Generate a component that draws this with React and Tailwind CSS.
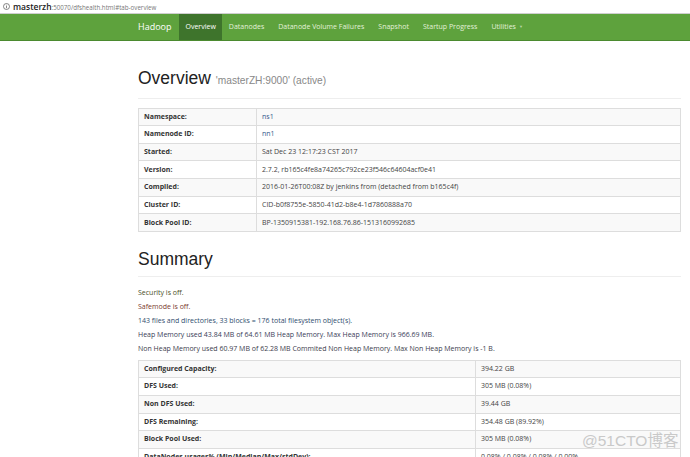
import React from "react";

const overviewRows = [
  ["Namespace:", "ns1", "text-[#34588c]"],
  ["Namenode ID:", "nn1", "text-[#34588c]"],
  ["Started:", "Sat Dec 23 12:17:23 CST 2017", "text-[#444]"],
  ["Version:", "2.7.2, rb165c4fe8a74265c792ce23f546c64604acf0e41", "text-[#444]"],
  ["Compiled:", "2016-01-26T00:08Z by jenkins from (detached from b165c4f)", "text-[#444]"],
  ["Cluster ID:", "CID-b0f8755e-5850-41d2-b8e4-1d7860888a70", "text-[#444]"],
  ["Block Pool ID:", "BP-1350915381-192.168.76.86-1513160992685", "text-[#444]"],
];

const summaryRows = [
  ["Configured Capacity:", "394.22 GB"],
  ["DFS Used:", "305 MB (0.08%)"],
  ["Non DFS Used:", "39.44 GB"],
  ["DFS Remaining:", "354.48 GB (89.92%)"],
  ["Block Pool Used:", "305 MB (0.08%)"],
  ["DataNodes usages% (Min/Median/Max/stdDev):", "0.08% / 0.08% / 0.08% / 0.00%"],
  ["Live Nodes", "3 (Decommissioned: 0)"],
];

const navItems = ["Datanodes", "Datanode Volume Failures", "Snapshot", "Startup Progress"];

const body = { fontFamily: '"Open Sans", "Noto Sans", sans-serif' };
const head = { fontFamily: '"Liberation Sans", Arial, sans-serif' };

function InfoTable({ rows, labelWidth }) {
  return (
    <div className="border border-[#ddd] border-b-0 text-[7px]" style={body}>
      {rows.map(([label, value, color], i) => (
        <div
          key={label}
          className={`flex h-[17.67px] items-center border-b border-[#ddd] ${i % 2 === 0 ? "bg-[#f9f9f9]" : "bg-white"}`}
        >
          <div className={`${labelWidth} h-full flex items-center shrink-0 border-r border-[#ddd] px-[5px] font-bold text-[#333]`}>
            {label}
          </div>
          <div className={`px-[5px] ${color || "text-[#444]"}`}>{value}</div>
        </div>
      ))}
    </div>
  );
}

export default function App() {
  return (
    <div className="relative h-[457px] w-[690px] overflow-hidden bg-white">
      {/* address bar */}
      <div className="flex h-[14px] items-center gap-[3px] border-b border-[#cfcfcf] pl-[3px] leading-[13px]" style={body}>
        <svg width="7" height="7" viewBox="0 0 10 10">
          <circle cx="5" cy="5" r="4.3" fill="none" stroke="#555" strokeWidth="1" />
          <rect x="4.5" y="4.2" width="1" height="3.3" fill="#555" />
          <rect x="4.5" y="2.5" width="1" height="1" fill="#555" />
        </svg>
        <span className="text-[8.5px] font-semibold text-[#222]">
          masterzh<span className="text-[6.2px] font-normal text-[#777]">:50070/dfshealth.html#tab-overview</span>
        </span>
      </div>

      {/* navbar */}
      <div className="flex h-[27px] items-stretch border-b border-[#4b8a2f] bg-[#5ea23d] pl-[138px]" style={body}>
        <div className="flex items-center pr-[8px] text-[9px] text-white">Hadoop</div>
        <div className="flex items-center bg-[#3e742c] px-[6px] text-[7px] text-white">Overview</div>
        {navItems.map((n) => (
          <div key={n} className="flex items-center px-[7px] text-[7px] text-[#e3f1da]">
            {n}
          </div>
        ))}
        <div className="flex items-center gap-[3px] px-[7px] text-[7px] text-[#e3f1da]">
          Utilities
          <span className="text-[4px] text-[#b9d8a8]">▼</span>
        </div>
      </div>

      <div className="ml-[138px] w-[543px]">
        {/* Overview */}
        <div className="mt-[27px] border-b border-[#eee] pb-[7px]">
          <h1 className="text-[17.5px] leading-[20px] text-[#222]" style={head}>
            Overview <span className="text-[10.2px] text-[#888]">'masterZH:9000' (active)</span>
          </h1>
        </div>
        <div className="mt-[8.5px]">
          <InfoTable rows={overviewRows} labelWidth="w-[118px]" />
        </div>

        {/* Summary */}
        <div className="mt-[16.5px] border-b border-[#eee] pb-[7px]">
          <h1 className="text-[17.5px] leading-[20px] text-[#222]" style={head}>
            Summary
          </h1>
        </div>
        <div className="mt-[9px] text-[7px] leading-[14.2px]" style={body}>
          <p className="text-[#4a5026]">Security is off.</p>
          <p className="text-[#7a3a2c]">Safemode is off.</p>
          <p className="text-[#2f4d6e]">143 files and directories, 33 blocks = 176 total filesystem object(s).</p>
          <p className="text-[#3a4058]">Heap Memory used 43.84 MB of 64.61 MB Heap Memory. Max Heap Memory is 966.69 MB.</p>
          <p className="text-[#3c3c4c]">Non Heap Memory used 60.97 MB of 62.28 MB Commited Non Heap Memory. Max Non Heap Memory is -1 B.</p>
        </div>
        <div className="mt-[3px]">
          <InfoTable rows={summaryRows} labelWidth="w-[337px]" />
        </div>
      </div>

      {/* watermark */}
      <div
        className="absolute left-[582px] top-[429px] text-[15.5px] text-[#c9c9c9]"
        style={{ fontFamily: '"Liberation Sans", "Noto Sans CJK SC", sans-serif' }}
      >
        @51CTO博客
      </div>
    </div>
  );
}
